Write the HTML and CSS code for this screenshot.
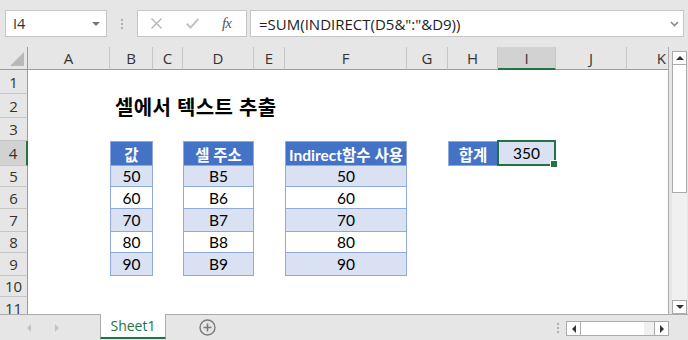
FILE: index.html
```html
<!DOCTYPE html>
<html lang="ko">
<head>
    <meta charset="UTF-8">
    <title>셀에서 텍스트 추출</title>
    <link rel="stylesheet" href="styles.css">
</head>
<body>
    <div class="window">
        <!-- formula bar -->
        <div class="formula-bar">
            <div class="name-box">
                <span>I4</span>
                <span class="caret-down"></span>
            </div>
            <div class="grip"><i></i><i></i><i></i></div>
            <div class="fx-buttons">
                <svg class="ico-cancel" width="11" height="11" viewBox="0 0 11 11"><path d="M0.5 0.5L10.5 10.5M10.5 0.5L0.5 10.5" stroke="#b3b3b3" stroke-width="1.3" fill="none"/></svg>
                <svg class="ico-enter" width="13" height="11" viewBox="0 0 13 11"><path d="M0.8 5.8L4.6 9.6L12.2 1" stroke="#c2c2c2" stroke-width="2" fill="none"/></svg>
                <span class="ico-fx">fx</span>
            </div>
            <div class="formula-input">
                <span>=SUM(INDIRECT(D5&amp;":"&amp;D9))</span>
                <svg width="9" height="6" viewBox="0 0 9 6"><path d="M1 1L4.5 4.5L8 1" stroke="#8a8a8a" stroke-width="1.6" fill="none"/></svg>
            </div>
        </div>

        <!-- sheet -->
        <div class="sheet">
            <div class="grid">
                <div class="corner r0 c0"><span></span></div>
                <div class="colhead r0 ca">A</div>
                <div class="colhead r0 cb">B</div>
                <div class="colhead r0 cc">C</div>
                <div class="colhead r0 cd">D</div>
                <div class="colhead r0 ce">E</div>
                <div class="colhead r0 cf">F</div>
                <div class="colhead r0 cg">G</div>
                <div class="colhead r0 ch">H</div>
                <div class="colhead r0 ci active">I</div>
                <div class="colhead r0 cj">J</div>
                <div class="colhead r0 ck">K</div>

                <div class="rowhead r1 c0">1</div>
                <div class="rowhead r2 c0">2</div>
                <div class="rowhead r3 c0">3</div>
                <div class="rowhead r4 c0 active">4</div>
                <div class="rowhead r5 c0">5</div>
                <div class="rowhead r6 c0">6</div>
                <div class="rowhead r7 c0">7</div>
                <div class="rowhead r8 c0">8</div>
                <div class="rowhead r9 c0">9</div>
                <div class="rowhead r10 c0">10</div>
                <div class="rowhead r11 c0">11</div>

                <div class="title r2 cb">셀에서 텍스트 추출</div>

                <!-- 값 -->
                <div class="cell head first r4 cb">값</div>
                <div class="cell band first r5 cb">50</div>
                <div class="cell first r6 cb">60</div>
                <div class="cell band first r7 cb">70</div>
                <div class="cell first r8 cb">80</div>
                <div class="cell band first r9 cb">90</div>

                <!-- 셀 주소 -->
                <div class="cell head first r4 cd">셀 주소</div>
                <div class="cell band first r5 cd">B5</div>
                <div class="cell first r6 cd">B6</div>
                <div class="cell band first r7 cd">B7</div>
                <div class="cell first r8 cd">B8</div>
                <div class="cell band first r9 cd">B9</div>

                <!-- Indirect -->
                <div class="cell head first r4 cf">Indirect함수 사용</div>
                <div class="cell band first r5 cf">50</div>
                <div class="cell first r6 cf">60</div>
                <div class="cell band first r7 cf">70</div>
                <div class="cell first r8 cf">80</div>
                <div class="cell band first r9 cf">90</div>

                <!-- 합계 -->
                <div class="cell head first r4 ch">합계</div>
                <div class="cell band selected r4 ci">350</div>
            </div>

            <div class="vscroll">
                <div class="sbtn up"><span></span></div>
                <div class="vthumb"></div>
                <div class="vtrack"></div>
                <div class="sbtn down"><span></span></div>
            </div>
        </div>

        <!-- sheet tabs -->
        <div class="tabbar">
            <div class="tab-nav">
                <span class="nav-left"></span>
                <span class="nav-right"></span>
            </div>
            <div class="tab">Sheet1</div>
            <svg class="add-sheet" width="17" height="17" viewBox="0 0 17 17">
                <circle cx="8.5" cy="8.5" r="7.5" stroke="#7b7b7b" stroke-width="1.4" fill="none"/>
                <path d="M8.5 4.5V12.5M4.5 8.5H12.5" stroke="#7b7b7b" stroke-width="1.6"/>
            </svg>
            <div class="tab-spacer"></div>
            <div class="grip small"><i></i><i></i><i></i></div>
            <div class="hscroll">
                <div class="sbtn left"><span></span></div>
                <div class="hthumb"></div>
                <div class="htrack"></div>
                <div class="sbtn right"><span></span></div>
            </div>
        </div>
    </div>
</body>
</html>
```

FILE: styles.css
```css
* {
    box-sizing: border-box;
}

body {
    margin: 0;
    width: 688px;
    height: 340px;
    overflow: hidden;
    background-color: #e6e6e6;
    font-family: 'Open Sans', 'Noto Sans CJK KR', sans-serif;
    color: #000;
}

.window {
    width: 688px;
    height: 340px;
    display: flex;
    flex-direction: column;
}

/* ---------- formula bar ---------- */

.formula-bar {
    height: 47px;
    display: flex;
    align-items: flex-start;
    padding-top: 10px;
}

.name-box {
    margin-left: 5px;
    width: 102px;
    height: 27px;
    background-color: #fff;
    border: 1px solid #c6c6c6;
    display: flex;
    align-items: center;
    justify-content: space-between;
    padding: 0 6px 0 7px;
    font-size: 14.5px;
    color: #333;
}

.caret-down {
    width: 0;
    height: 0;
    border-left: 4px solid transparent;
    border-right: 4px solid transparent;
    border-top: 4px solid #777;
}

.grip {
    width: 30px;
    height: 27px;
    display: flex;
    flex-direction: column;
    align-items: center;
    justify-content: center;
    gap: 2px;
}

.grip i {
    display: block;
    width: 2px;
    height: 2px;
    background-color: #b0b0b0;
}

.fx-buttons {
    width: 110px;
    height: 27px;
    background-color: #fff;
    border: 1px solid #c6c6c6;
    display: flex;
    align-items: center;
    padding-left: 13px;
}

.ico-enter {
    margin-left: 24px;
}

.ico-fx {
    margin-left: 23px;
    font-family: 'Liberation Serif', serif;
    font-style: italic;
    font-size: 15px;
    color: #555;
    letter-spacing: -1px;
}

.formula-input {
    margin-left: 3px;
    width: 434px;
    height: 27px;
    background-color: #fff;
    border: 1px solid #c6c6c6;
    display: flex;
    align-items: center;
    justify-content: space-between;
    padding: 0 4px 0 8px;
    font-size: 15px;
    color: #222;
}

/* ---------- sheet grid ---------- */

.sheet {
    height: 267px;
    display: flex;
}

.grid {
    width: 669px;
    height: 267px;
    overflow: hidden;
    background-color: #fff;
    border-right: 1px solid #ababab;
    display: grid;
    grid-template-columns: 28px 82px 43px 30px 71px 31px 122px 41px 50px 58px 71px 41px;
    grid-template-rows: 23px 24px 24px 23px 25px 21px 22px 23px 21px 23px 21px 22px;
    font-family: 'Lato', 'Noto Sans CJK KR', sans-serif;
    font-size: 15.5px;
}

.c0 { grid-column: 1; }
.ca { grid-column: 2; }
.cb { grid-column: 3; }
.cc { grid-column: 4; }
.cd { grid-column: 5; }
.ce { grid-column: 6; }
.cf { grid-column: 7; }
.cg { grid-column: 8; }
.ch { grid-column: 9; }
.ci { grid-column: 10; }
.cj { grid-column: 11; }
.ck { grid-column: 12; }

.r0 { grid-row: 1; }
.r1 { grid-row: 2; }
.r2 { grid-row: 3; }
.r3 { grid-row: 4; }
.r4 { grid-row: 5; }
.r5 { grid-row: 6; }
.r6 { grid-row: 7; }
.r7 { grid-row: 8; }
.r8 { grid-row: 9; }
.r9 { grid-row: 10; }
.r10 { grid-row: 11; }
.r11 { grid-row: 12; }

.corner {
    background-color: #e6e6e6;
    border-right: 1px solid #9b9b9b;
    border-bottom: 1px solid #9b9b9b;
    display: flex;
    align-items: flex-end;
    justify-content: flex-end;
    padding: 0 3px 3px 0;
}

.corner span {
    width: 0;
    height: 0;
    border-left: 14px solid transparent;
    border-bottom: 14px solid #b8b8b8;
}

.colhead {
    background-color: #e6e6e6;
    border-right: 1px solid #c6c6c6;
    border-bottom: 1px solid #9b9b9b;
    display: flex;
    align-items: center;
    justify-content: center;
    font-family: 'Open Sans', sans-serif;
    font-size: 15px;
    color: #333;
}

.colhead.ck {
    justify-content: flex-end;
    padding-right: 2px;
    border-right: none;
}

.colhead.active {
    background-color: #d2d2d2;
    border-bottom: 2px solid #217346;
}

.rowhead {
    background-color: #e6e6e6;
    border-right: 1px solid #9b9b9b;
    border-bottom: 1px solid #c6c6c6;
    display: flex;
    align-items: center;
    justify-content: center;
    font-family: 'Open Sans', sans-serif;
    font-size: 15px;
    color: #333;
}

.rowhead.active {
    background-color: #d2d2d2;
    border-right: 2px solid #217346;
}

.title {
    grid-column: 3 / 8;
    display: flex;
    align-items: center;
    padding-left: 5px;
    font-family: 'Noto Sans CJK KR', sans-serif;
    font-weight: bold;
    font-size: 20px;
    letter-spacing: 0.3px;
    white-space: nowrap;
}

.cell {
    display: flex;
    align-items: center;
    justify-content: center;
    white-space: nowrap;
    background-color: #fff;
    border-right: 1px solid #8ea9db;
    border-bottom: 1px solid #8ea9db;
}

.cell.first {
    border-left: 1px solid #8ea9db;
}

.cell.head {
    background-color: #4472c4;
    color: #fff;
    font-weight: bold;
    border-top: 1px solid #8ea9db;
}

.cell.band {
    background-color: #d9e1f2;
}

.cell.selected {
    position: relative;
    border: 2px solid #217346;
    margin: -1px 0 0 -1px;
}

.cell.selected::after {
    content: "";
    position: absolute;
    right: -4px;
    bottom: -4px;
    width: 6px;
    height: 6px;
    background-color: #217346;
    border: 1px solid #fff;
}

/* ---------- scroll bars ---------- */

.vscroll {
    width: 15px;
    margin-left: 3px;
    padding-top: 4px;
    display: flex;
    flex-direction: column;
}

.sbtn {
    width: 15px;
    height: 14px;
    background-color: #fff;
    border: 1px solid #ababab;
    display: flex;
    align-items: center;
    justify-content: center;
}

.sbtn span {
    width: 0;
    height: 0;
}

.sbtn.up span {
    border-left: 4px solid transparent;
    border-right: 4px solid transparent;
    border-bottom: 4px solid #333;
}

.sbtn.down span {
    border-left: 4px solid transparent;
    border-right: 4px solid transparent;
    border-top: 4px solid #333;
}

.sbtn.left span {
    border-top: 4px solid transparent;
    border-bottom: 4px solid transparent;
    border-right: 4px solid #333;
}

.sbtn.right span {
    border-top: 4px solid transparent;
    border-bottom: 4px solid transparent;
    border-left: 4px solid #333;
}

.vthumb {
    height: 128px;
    background-color: #fff;
    border: 1px solid #ababab;
    border-top: none;
}

.vtrack {
    flex: 1;
    background-color: #f0f0f0;
}

/* ---------- tab bar ---------- */

.tabbar {
    height: 26px;
    border-top: 1px solid #ababab;
    display: flex;
    align-items: flex-start;
}

.tab-nav {
    width: 100px;
    height: 25px;
    display: flex;
    align-items: center;
    padding-left: 27px;
    gap: 24px;
}

.nav-left {
    border-top: 4px solid transparent;
    border-bottom: 4px solid transparent;
    border-right: 4px solid #c3c3c3;
}

.nav-right {
    border-top: 4px solid transparent;
    border-bottom: 4px solid transparent;
    border-left: 4px solid #c3c3c3;
}

.tab {
    width: 66px;
    height: 25px;
    margin-top: -1px;
    background-color: #fff;
    border-left: 1px solid #ababab;
    border-right: 1px solid #ababab;
    border-bottom: 2px solid #217346;
    display: flex;
    align-items: center;
    justify-content: center;
    font-family: 'Open Sans', sans-serif;
    font-size: 14px;
    color: #217346;
}

.add-sheet {
    margin: 4px 0 0 33px;
}

.tab-spacer {
    flex: 1;
}

.grip.small {
    width: 16px;
    height: 25px;
}

.hscroll {
    margin: 6px 19px 0 0;
    height: 15px;
    display: flex;
}

.hscroll .sbtn {
    width: 15px;
    height: 15px;
}

.hthumb {
    width: 63px;
    height: 15px;
    background-color: #fff;
    border-top: 1px solid #ababab;
    border-bottom: 1px solid #ababab;
}

.htrack {
    width: 10px;
    height: 15px;
    background-color: #f0f0f0;
    border-top: 1px solid #ababab;
    border-bottom: 1px solid #ababab;
}
```
